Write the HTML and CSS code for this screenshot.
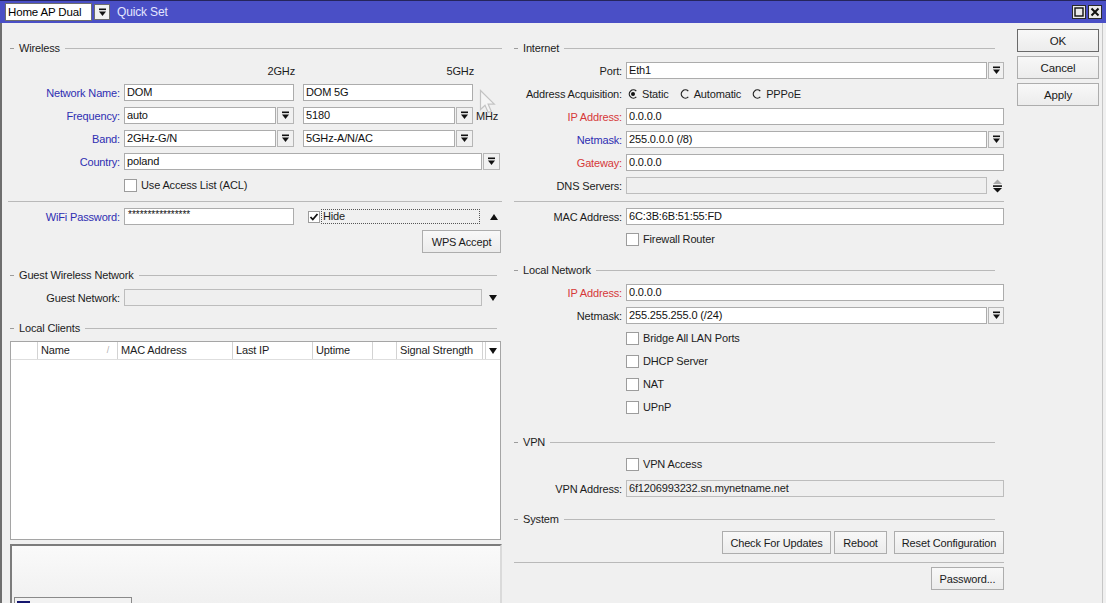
FILE: index.html
```html
<!DOCTYPE html>
<html>
<head>
<meta charset="utf-8">
<title>Quick Set</title>
<link rel="stylesheet" href="styles.css">
</head>
<body>
<div class="window">
  <div class="titlebar">
    <div class="tsel">Home AP Dual</div>
    <span class="ddbtn tdd"><svg width="9" height="9" viewBox="0 0 9 9"><rect x="1" y="0.5" width="7" height="1.6" fill="#111"/><path d="M1 3.5h7l-3.5 4.5z" fill="#111"/></svg></span>
    <span class="ttitle">Quick Set</span>
    <span class="tspace"></span>
    <span class="wbtn"><svg width="12" height="12" viewBox="0 0 12 12"><rect x="2" y="2" width="8" height="8" fill="none" stroke="#111" stroke-width="1.4"/></svg></span>
    <span class="wbtn"><svg width="12" height="12" viewBox="0 0 12 12"><path d="M2.5 2.5L9.5 9.5M9.5 2.5L2.5 9.5" stroke="#111" stroke-width="2"/></svg></span>
  </div>

  <div class="main">
    <!-- LEFT COLUMN -->
    <div class="lcol">
      <div class="legend mt18"><span>Wireless</span></div>
      <div class="bandhdr mt9"><span>2GHz</span><span class="second">5GHz</span></div>

      <div class="frow mt6">
        <span class="lbl blue">Network Name:</span>
        <div class="inp w170">DOM</div>
        <div class="inp w170 gap9">DOM 5G</div>
      </div>
      <div class="frow mt6">
        <span class="lbl blue">Frequency:</span>
        <div class="combo w170"><div class="inp">auto</div><span class="ddbtn"><svg width="9" height="9" viewBox="0 0 9 9"><rect x="1" y="0.5" width="7" height="1.6" fill="#111"/><path d="M1 3.5h7l-3.5 4.5z" fill="#111"/></svg></span></div>
        <div class="combo w170 gap9"><div class="inp">5180</div><span class="ddbtn"><svg width="9" height="9" viewBox="0 0 9 9"><rect x="1" y="0.5" width="7" height="1.6" fill="#111"/><path d="M1 3.5h7l-3.5 4.5z" fill="#111"/></svg></span></div>
        <span class="unit">MHz</span>
      </div>
      <div class="frow mt6">
        <span class="lbl blue">Band:</span>
        <div class="combo w170"><div class="inp">2GHz-G/N</div><span class="ddbtn"><svg width="9" height="9" viewBox="0 0 9 9"><rect x="1" y="0.5" width="7" height="1.6" fill="#111"/><path d="M1 3.5h7l-3.5 4.5z" fill="#111"/></svg></span></div>
        <div class="combo w170 gap9"><div class="inp">5GHz-A/N/AC</div><span class="ddbtn"><svg width="9" height="9" viewBox="0 0 9 9"><rect x="1" y="0.5" width="7" height="1.6" fill="#111"/><path d="M1 3.5h7l-3.5 4.5z" fill="#111"/></svg></span></div>
      </div>
      <div class="frow mt6">
        <span class="lbl blue">Country:</span>
        <div class="combo w376"><div class="inp">poland</div><span class="ddbtn"><svg width="9" height="9" viewBox="0 0 9 9"><rect x="1" y="0.5" width="7" height="1.6" fill="#111"/><path d="M1 3.5h7l-3.5 4.5z" fill="#111"/></svg></span></div>
      </div>
      <div class="crow mt8"><span class="cb"></span><span>Use Access List (ACL)</span></div>

      <div class="sep lsep mt9"></div>

      <div class="frow mt6">
        <span class="lbl blue">WiFi Password:</span>
        <div class="inp w170 pw">****************</div>
        <span class="cb small hidecb"><svg width="10" height="10" viewBox="0 0 10 10"><path d="M1.5 5l2.3 2.5L8.5 2" fill="none" stroke="#111" stroke-width="1.8"/></svg></span>
        <span class="focus">Hide</span>
        <span class="tri-up"></span>
      </div>
      <div class="btnrow mt5 wpsrow"><span class="btn wps">WPS Accept</span></div>

      <div class="legend short mt15"><span>Guest Wireless Network</span></div>
      <div class="frow mt7">
        <span class="lbl">Guest Network:</span>
        <div class="inp dis w358"></div>
        <span class="tri-down guest-tri"></span>
      </div>

      <div class="legend short mt15"><span>Local Clients</span></div>
      <div class="tbl mt6">
        <div class="thead">
          <span class="th c0"></span>
          <span class="th c1 sort"><span>Name</span><span class="sortmark">/</span></span>
          <span class="th c2">MAC Address</span>
          <span class="th c3">Last IP</span>
          <span class="th c4">Uptime</span>
          <span class="th c5"></span>
          <span class="th c6">Signal Strength</span>
          <span class="th c7"></span>
          <span class="th c8"><span class="tri-down"></span></span>
        </div>
      </div>
      <div class="bpanel">
        <div class="tab"><i></i></div>
      </div>
    </div>

    <!-- RIGHT COLUMN -->
    <div class="rcol">
      <div class="legend mt18"><span>Internet</span></div>
      <div class="frow mt7">
        <span class="lbl">Port:</span>
        <div class="combo w378"><div class="inp">Eth1</div><span class="ddbtn"><svg width="9" height="9" viewBox="0 0 9 9"><rect x="1" y="0.5" width="7" height="1.6" fill="#111"/><path d="M1 3.5h7l-3.5 4.5z" fill="#111"/></svg></span></div>
      </div>
      <div class="frow mt6">
        <span class="lbl">Address Acquisition:</span>
        <span class="radio first"><svg width="10" height="10" viewBox="0 0 10 10"><path d="M8.3 2.1A4.1 4.1 0 1 0 8.3 7.9" fill="none" stroke="#222" stroke-width="1.3"/><circle cx="5" cy="5" r="2" fill="#111"/></svg><span>Static</span></span>
        <span class="radio"><svg width="10" height="10" viewBox="0 0 10 10"><path d="M8.3 2.1A4.1 4.1 0 1 0 8.3 7.9" fill="none" stroke="#222" stroke-width="1.3"/></svg><span>Automatic</span></span>
        <span class="radio"><svg width="10" height="10" viewBox="0 0 10 10"><path d="M8.3 2.1A4.1 4.1 0 1 0 8.3 7.9" fill="none" stroke="#222" stroke-width="1.3"/></svg><span>PPPoE</span></span>
      </div>
      <div class="frow mt6">
        <span class="lbl red">IP Address:</span>
        <div class="inp w378">0.0.0.0</div>
      </div>
      <div class="frow mt6">
        <span class="lbl blue">Netmask:</span>
        <div class="combo w378"><div class="inp">255.0.0.0 (/8)</div><span class="ddbtn"><svg width="9" height="9" viewBox="0 0 9 9"><rect x="1" y="0.5" width="7" height="1.6" fill="#111"/><path d="M1 3.5h7l-3.5 4.5z" fill="#111"/></svg></span></div>
      </div>
      <div class="frow mt6">
        <span class="lbl red">Gateway:</span>
        <div class="inp w378">0.0.0.0</div>
      </div>
      <div class="frow mt6">
        <span class="lbl">DNS Servers:</span>
        <div class="inp dis w361"></div>
        <span class="updown"><svg width="11" height="14" viewBox="0 0 11 14"><path d="M1 5h9L5.5 0.5z" fill="#a8a8a8"/><rect x="1" y="6.3" width="9" height="1.6" fill="#111"/><path d="M1 9h9l-4.5 4.5z" fill="#111"/></svg></span>
      </div>

      <div class="sep mt7"></div>

      <div class="frow mt6">
        <span class="lbl">MAC Address:</span>
        <div class="inp w378">6C:3B:6B:51:55:FD</div>
      </div>
      <div class="crow mt7"><span class="cb"></span><span>Firewall Router</span></div>

      <div class="legend mt17"><span>Local Network</span></div>
      <div class="frow mt7">
        <span class="lbl red">IP Address:</span>
        <div class="inp w378">0.0.0.0</div>
      </div>
      <div class="frow mt6">
        <span class="lbl">Netmask:</span>
        <div class="combo w378"><div class="inp">255.255.255.0 (/24)</div><span class="ddbtn"><svg width="9" height="9" viewBox="0 0 9 9"><rect x="1" y="0.5" width="7" height="1.6" fill="#111"/><path d="M1 3.5h7l-3.5 4.5z" fill="#111"/></svg></span></div>
      </div>
      <div class="crow mt7"><span class="cb"></span><span>Bridge All LAN Ports</span></div>
      <div class="crow mt9"><span class="cb"></span><span>DHCP Server</span></div>
      <div class="crow mt9"><span class="cb"></span><span>NAT</span></div>
      <div class="crow mt9"><span class="cb"></span><span>UPnP</span></div>

      <div class="legend mt21"><span>VPN</span></div>
      <div class="crow mt8"><span class="cb"></span><span>VPN Access</span></div>
      <div class="frow mt9">
        <span class="lbl">VPN Address:</span>
        <div class="inp dis dark w378">6f1206993232.sn.mynetname.net</div>
      </div>

      <div class="legend mt15"><span>System</span></div>
      <div class="btnrow mt5">
        <span class="btn b-upd">Check For Updates</span>
        <span class="btn b-reb">Reboot</span>
        <span class="btn b-reset">Reset Configuration</span>
      </div>
      <div class="sep mt8"></div>
      <div class="btnrow mt4">
        <span class="btn b-pass">Password...</span>
      </div>
    </div>

    <!-- ACTION BUTTONS -->
    <div class="bcol">
      <span class="btn side default">OK</span>
      <span class="btn side">Cancel</span>
      <span class="btn side">Apply</span>
    </div>
  </div>

  <svg class="cursor" width="18" height="26" viewBox="0 0 18 26"><path d="M1.5 1.5v19l4.5-4.3 3.2 7.3 3-1.3-3.1-7.1h6.2z" fill="rgba(255,255,255,0.35)" stroke="#c3c3c3" stroke-width="1.2"/></svg>
</div>
</body>
</html>
```

FILE: styles.css
```css
* { box-sizing: border-box; }
html, body { margin: 0; padding: 0; }
body {
  font-family: "Liberation Sans", Arial, sans-serif;
  font-size: 11px;
  letter-spacing: -0.15px;
  color: #1c1c1c;
  background: #f0f0f0;
}

.window {
  position: relative;
  width: 1106px;
  height: 603px;
  overflow: hidden;
  display: flex;
  flex-direction: column;
  background: #f0f0f0;
}

/* title bar */
.titlebar {
  flex: none;
  height: 23px;
  background: #4a4fc6;
  border-top: 1px solid #25255c;
  display: flex;
  align-items: center;
  padding-left: 5px;
  padding-right: 4px;
}
.tsel {
  width: 87px;
  height: 18px;
  background: #fff;
  border: 1px solid #6d6d6d;
  padding-left: 2px;
  line-height: 16px;
  font-size: 11.5px;
  color: #000;
}
.ddbtn {
  flex: none;
  display: flex;
  align-items: center;
  justify-content: center;
  width: 16px;
  height: 17px;
  background: #f1f1f1;
  border: 1px solid #b6b6b6;
}
.tdd { margin-left: 2px; height: 16px; border-color: #6d6d6d; }
.ttitle { margin-left: 7px; color: #e3e6ff; font-size: 12px; }
.tspace { flex: 1; }
.wbtn {
  width: 14px;
  height: 14px;
  margin-left: 2px;
  background: #eaeaea;
  border: 1px solid #2a2a2a;
  display: flex;
  align-items: center;
  justify-content: center;
}

/* main area */
.main {
  flex: 1;
  min-height: 0;
  display: flex;
  border-left: 2px solid #6e6e6e;
  border-right: 1px solid #c6c6c6;
  margin-right: 3px;
}
.lcol { flex: none; width: 492px; margin-left: 8px; display: flex; flex-direction: column; }
.rcol { flex: none; width: 490px; margin-left: 12px; display: flex; flex-direction: column; }
.bcol { flex: none; width: 82px; margin-left: 13px; display: flex; flex-direction: column; padding-top: 6px; }

/* spacing helpers */
.mt4 { margin-top: 4px; }
.mt5 { margin-top: 5px; }
.mt6 { margin-top: 6px; }
.mt7 { margin-top: 7px; }
.mt8 { margin-top: 8px; }
.mt9 { margin-top: 9px; }
.mt15 { margin-top: 15px; }
.mt17 { margin-top: 17px; }
.mt18 { margin-top: 18px; }
.mt21 { margin-top: 21px; }

/* group legends */
.legend { flex: none; display: flex; align-items: center; height: 14px; white-space: nowrap; }
.legend::before { content: ""; width: 4px; border-top: 1px solid #9c9c9c; margin-right: 5px; }
.legend::after { content: ""; flex: 1; border-top: 1px solid #b9b9b9; margin-left: 5px; }
.lcol .legend.short { margin-right: 5px; }
.rcol .legend { margin-right: 9px; }

.sep { flex: none; border-top: 1px solid #b9b9b9; }
.lsep { margin-left: -2px; }

.bandhdr { flex: none; display: flex; height: 14px; line-height: 14px; padding-left: 114px; }
.bandhdr span { width: 171px; text-align: right; }
.bandhdr .second { margin-left: 8px; }

/* form rows */
.frow { flex: none; display: flex; align-items: center; height: 17px; }
.lbl { flex: none; width: 110px; margin-right: 4px; text-align: right; white-space: nowrap; }
.rcol .lbl { width: 108px; }
.blue { color: #2e2eb2; }
.red { color: #d63838; }

.inp {
  flex: none;
  height: 17px;
  border: 1px solid #acacac;
  background: #fff;
  padding: 0 2px;
  line-height: 15px;
  white-space: nowrap;
  overflow: hidden;
  color: #111;
}
.inp.dis { background: #efefef; border-color: #bdbdbd; }
.inp.dark { color: #222; }
.w170 { width: 170px; }
.w358 { width: 358px; }
.w361 { width: 361px; }
.w376 { width: 376px; }
.w378 { width: 378px; }
.gap9 { margin-left: 9px; }

.combo { flex: none; display: flex; gap: 1px; height: 17px; }
.combo .inp { flex: 1; width: auto; }
.combo .ddbtn { width: 17px; }
.rcol .combo .ddbtn { width: 16px; }

.unit { margin-left: 3px; }

.pw { font-size: 10px; letter-spacing: 0; line-height: 11px; padding-left: 3px; }

/* checkboxes */
.crow { flex: none; display: flex; align-items: center; height: 14px; padding-left: 114px; }
.rcol .crow { padding-left: 112px; }
.cb {
  flex: none;
  width: 13px;
  height: 13px;
  border: 1px solid #9c9c9c;
  background: #fff;
  margin-right: 4px;
  display: flex;
  align-items: center;
  justify-content: center;
}
.cb.small { width: 12px; height: 12px; }
.hidecb { margin-left: 14px; margin-right: 1px; }
.focus {
  width: 159px;
  height: 15px;
  border: 1px dotted #555;
  padding-left: 1px;
  line-height: 13px;
}

.tri-up {
  width: 0; height: 0;
  border-left: 4.5px solid transparent;
  border-right: 4.5px solid transparent;
  border-bottom: 6px solid #111;
  margin-left: 10px;
}
.tri-down {
  display: block;
  width: 0; height: 0;
  border-left: 4.5px solid transparent;
  border-right: 4.5px solid transparent;
  border-top: 6px solid #111;
}
.guest-tri { margin-left: 7px; }

.updown { margin-left: 5px; display: flex; }

/* radios */
.radio { display: flex; align-items: center; margin-right: 11px; }
.radio.first { margin-left: 2px; }
.radio span { margin-left: 4px; }

/* buttons */
.btnrow { flex: none; display: flex; justify-content: flex-end; }
.wpsrow { margin-right: 1px; }
.btn {
  flex: none;
  height: 23px;
  border: 1px solid #adadad;
  background: linear-gradient(#f8f8f8, #ececec);
  display: flex;
  align-items: center;
  justify-content: center;
  white-space: nowrap;
  color: #1a1a1a;
}
.wps { width: 79px; }
.b-upd { width: 109px; }
.b-reb { width: 53px; margin-left: 3px; }
.b-reset { width: 110px; margin-left: 7px; }
.b-pass { width: 73px; }

.side { width: 82px; height: 23px; margin-bottom: 4px; font-size: 11.5px; }
.side.default { border-color: #6a6a6a; }

/* clients table */
.tbl { flex: none; width: 491px; height: 199px; border: 1px solid #a5a5a5; background: #fff; }
.thead { display: flex; height: 18px; border-bottom: 1px solid #dedede; }
.th {
  flex: none;
  border-right: 1px solid #d3d3d3;
  padding-left: 3px;
  line-height: 17px;
  white-space: nowrap;
}
.c0 { width: 27px; }
.c1 { width: 80px; }
.c2 { width: 115px; }
.c3 { width: 80px; }
.c4 { width: 60px; }
.c5 { width: 24px; }
.c6 { width: 86px; }
.c7 { width: 3px; padding: 0; }
.c8 { flex: 1; border-right: none; display: flex; align-items: center; justify-content: center; padding: 0; }
.sort { display: flex; justify-content: space-between; padding-right: 8px; }
.sortmark { color: #b0b0b0; font-size: 9px; }

/* bottom panel */
.bpanel {
  flex: 1;
  width: 492px;
  margin-top: 4px;
  border: 2px solid;
  border-color: #7c7c7c #dadada #dadada #7c7c7c;
  background: linear-gradient(#fafafa, #eeeeee);
  padding: 51px 0 0 2px;
}
.tab {
  width: 118px;
  height: 20px;
  border: 1px solid #8a8a8a;
  background: #f2f2f2;
  padding: 3px 0 0 2px;
}
.tab i { display: block; width: 13px; height: 10px; background: #15166e; }

.cursor { position: absolute; left: 479px; top: 89px; }
```
